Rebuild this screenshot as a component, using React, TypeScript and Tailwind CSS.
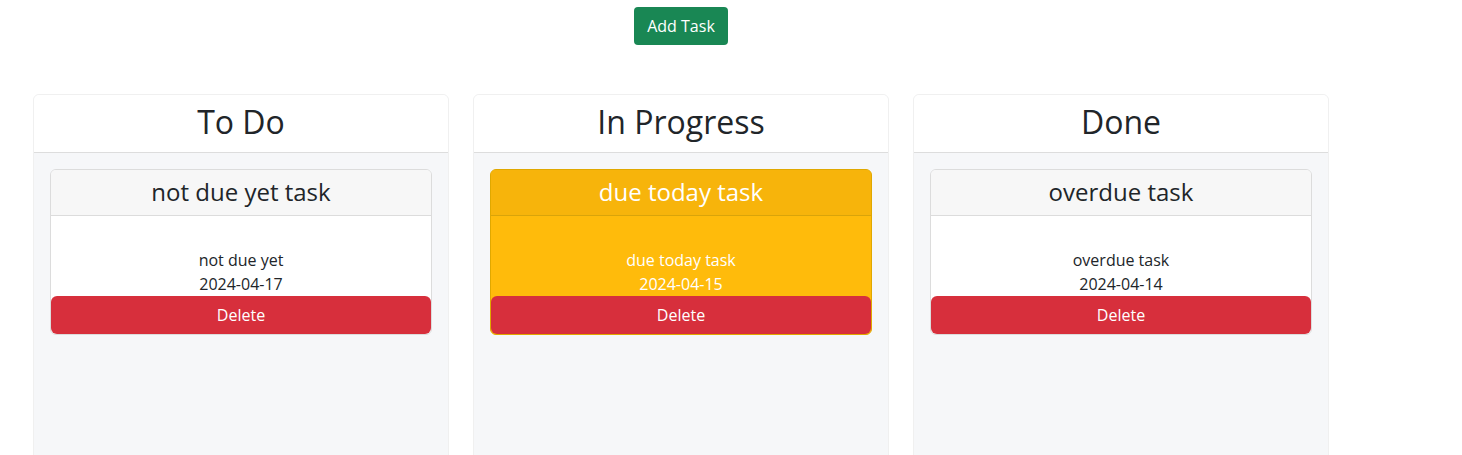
import React from "react";

type Task = { title: string; desc: string; date: string; warn?: boolean };

const columns: { name: string; tasks: Task[] }[] = [
  { name: "To Do", tasks: [{ title: "not due yet task", desc: "not due yet", date: "2024-04-17" }] },
  { name: "In Progress", tasks: [{ title: "due today task", desc: "due today task", date: "2024-04-15", warn: true }] },
  { name: "Done", tasks: [{ title: "overdue task", desc: "overdue task", date: "2024-04-14" }] },
];

function TaskCard({ t }: { t: Task }) {
  return (
    <div
      className={
        t.warn
          ? "rounded-[6px] border border-[#e0a800] bg-[#ffbb0b] text-white"
          : "rounded-[6px] border border-[#dcdcdc] bg-white text-[#212529]"
      }
    >
      <div
        className={
          t.warn
            ? "h-[46px] pb-[2px] flex items-center justify-center border-b border-[#d9a40a] bg-[#f7b40b] rounded-t-[5px] text-[24px]"
            : "h-[46px] pb-[2px] flex items-center justify-center border-b border-[#dcdcdc] bg-[#f7f7f7] rounded-t-[5px] text-[24px]"
        }
      >
        {t.title}
      </div>
      <div className="pt-[32px] text-center text-[16px] leading-[24px]">
        <div>{t.desc}</div>
        <div>{t.date}</div>
      </div>
      <button className="w-full h-[38px] rounded-[6px] bg-[#d72f3c] text-white text-[16px]">Delete</button>
    </div>
  );
}

export default function App() {
  return (
    <div className="w-[1462px] h-[455px] overflow-hidden bg-white" style={{ fontFamily: '"Open Sans", sans-serif' }}>
      <div className="ml-[33px] w-[1296px]">
        <div className="flex justify-center pt-[7px]">
          <button className="h-[38px] w-[94px] rounded-[4px] bg-[#198754] text-white text-[16px]">Add Task</button>
        </div>
        <div className="flex gap-[24px] pt-[49px]">
          {columns.map((c) => (
            <div key={c.name} className="w-[416px] h-[362px] rounded-t-[6px] border border-[#f0f0f0] bg-[#f6f7f9]">
              <div className="h-[58px] pb-[4px] flex items-center justify-center bg-white border-b border-[#dddddd] rounded-t-[5px] text-[32px] text-[#212529]">
                {c.name}
              </div>
              <div className="p-[16px]">
                {c.tasks.map((t) => (
                  <TaskCard key={t.title} t={t} />
                ))}
              </div>
            </div>
          ))}
        </div>
      </div>
    </div>
  );
}
